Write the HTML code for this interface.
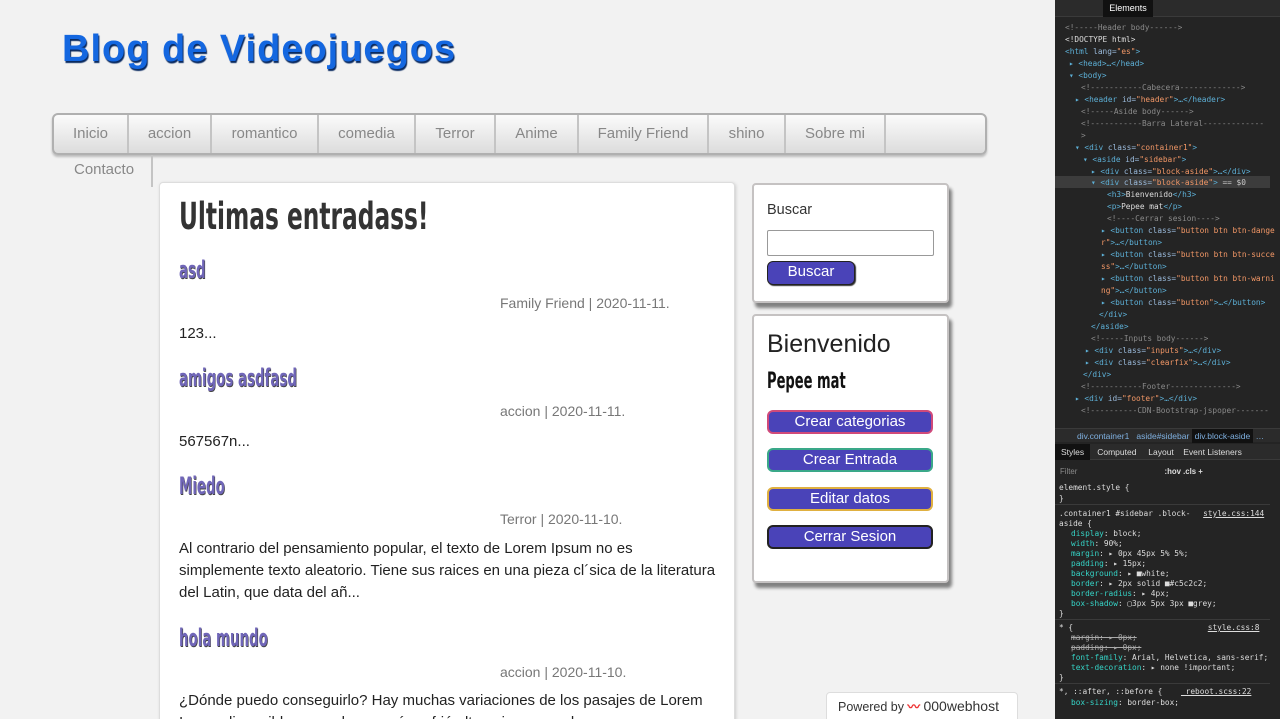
<!DOCTYPE html>
<html><head><meta charset="utf-8"><style>
*{margin:0;padding:0;box-sizing:border-box}
html,body{width:1280px;height:719px;overflow:hidden}
body{background:#f3f3f3;font-family:"Liberation Sans",Arial,sans-serif;position:relative}
.page{position:absolute;left:0;top:0;width:1055px;height:719px;background:#f2f2f2;overflow:hidden}
h1{position:absolute;left:62px;top:28px;font-size:38px;font-weight:bold;color:#1467e0;text-shadow:1px 2px 1px #0a2a60;letter-spacing:1px}
.nav{position:absolute;left:52px;top:113px;width:935px;height:42px;border:2px solid #b0b0b0;border-radius:6px;background:linear-gradient(#fbfbfb,#dcdcdc);box-shadow:0 2px 2px #bbb}
.nav span{position:absolute;top:0;height:38px;line-height:38px;text-align:center;color:#888;font-size:15px;border-right:2px solid #c4c4c4}
.cont{position:absolute;left:52px;top:155px;width:101px;height:32px;border-right:2px solid #c4c4c4;color:#888;font-size:15px;line-height:30px;padding-left:22px}
.main{position:absolute;left:159px;top:182px;width:576px;height:560px;background:#fff;border:1px solid #ddd;border-radius:4px;box-shadow:1px 1px 3px #ccc;padding:0 20px}
.main h2{position:absolute;left:19px;top:12px;font-size:37px;color:#333;font-weight:bold;font-family:"DejaVu Sans Condensed","Liberation Sans Narrow",sans-serif;transform:scaleX(.7);transform-origin:left;white-space:nowrap}
.t{position:absolute;left:19px;font-size:24px;color:#7066b8;font-weight:bold;font-family:"DejaVu Sans Condensed",sans-serif;transform:scaleX(.62);transform-origin:left;white-space:nowrap;text-shadow:1px 1px 0 #444}
.m{position:absolute;left:340px;font-size:14px;color:#777}
.p{position:absolute;left:19px;width:540px;font-size:15px;color:#222;line-height:22px}
.box{position:absolute;left:752px;width:197px;background:#fff;border:2px solid #c5c2c2;border-radius:4px;box-shadow:3px 5px 3px grey;padding:15px}
.btn{display:block;background:#4a43b8;color:#fff;font-size:15px;text-align:center;border-radius:6px;height:24px;line-height:20px;position:absolute;left:13px;width:166px}
.dev{position:absolute;left:1055px;top:0;width:225px;height:719px;background:#242424;font-family:"DejaVu Sans Mono",monospace;font-size:7.8px;color:#ddd;overflow:hidden}
.dev .l{position:absolute;white-space:nowrap}
.c{color:#8a8a8a}.tg{color:#5db0d7}.at{color:#9bbbdc}.v{color:#f29766}.pr{color:#35d4c7}
</style></head><body>
<div class="page">
<h1>Blog de Videojuegos</h1>
<div class="nav">
<span style="left:0;width:75px">Inicio</span><span style="left:75px;width:83px">accion</span><span style="left:158px;width:107px">romantico</span><span style="left:265px;width:97px">comedia</span><span style="left:362px;width:80px">Terror</span><span style="left:442px;width:83px">Anime</span><span style="left:525px;width:130px">Family Friend</span><span style="left:655px;width:77px">shino</span><span style="left:732px;width:100px">Sobre mi</span><span style="left:832px;width:100px;border:none"></span>
</div>
<div class="cont">Contacto</div>
<div class="main">
<h2>Ultimas entradass!</h2>
<div class="t" style="top:73px">asd</div>
<div class="m" style="top:112px">Family Friend | 2020-11-11.</div>
<div class="p" style="top:140px">123...</div>
<div class="t" style="top:181px">amigos asdfasd</div>
<div class="m" style="top:220px">accion | 2020-11-11.</div>
<div class="p" style="top:248px">567567n...</div>
<div class="t" style="top:289px">Miedo</div>
<div class="m" style="top:328px">Terror | 2020-11-10.</div>
<div class="p" style="top:355px">Al contrario del pensamiento popular, el texto de Lorem Ipsum no es simplemente texto aleatorio. Tiene sus raices en una pieza cl´sica de la literatura del Latin, que data del añ...</div>
<div class="t" style="top:441px">hola mundo</div>
<div class="m" style="top:481px">accion | 2020-11-10.</div>
<div class="p" style="top:507px">¿Dónde puedo conseguirlo? Hay muchas variaciones de los pasajes de Lorem Ipsum disponibles, pero la mayoría sufrió alteraciones en alguna...</div>
</div>
<div class="box" style="top:183px;height:120px">
<div style="font-size:14.5px;color:#333;position:absolute;left:13px;top:17px">Buscar</div>
<div style="position:absolute;left:13px;top:45px;width:167px;height:26px;border:1px solid #999;border-radius:2px"></div>
<div class="btn" style="top:76px;width:88px;border:1px solid #222;box-shadow:1px 1px 1px #333">Buscar</div>
</div>
<div class="box" style="top:314px;height:269px">
<div style="position:absolute;left:13px;top:14px;font-size:25px;color:#222">Bienvenido</div>
<div style="position:absolute;left:13px;top:53px;font-size:22px;color:#111;font-weight:bold;font-family:'DejaVu Sans Condensed',sans-serif;transform:scaleX(.66);transform-origin:left;white-space:nowrap">Pepee mat</div>
<div class="btn" style="top:94px;border:2px solid #d04a7a">Crear categorias</div>
<div class="btn" style="top:132px;border:2px solid #3aa889">Crear Entrada</div>
<div class="btn" style="top:171px;border:2px solid #e0b040">Editar datos</div>
<div class="btn" style="top:209px;border:2px solid #222">Cerrar Sesion</div>
</div>
<div style="position:absolute;left:826px;top:692px;width:192px;height:30px;background:#fff;border:1px solid #ddd;border-radius:4px 4px 0 0;font-size:12.5px;color:#333;line-height:26px;padding-left:11px">Powered by <span style="color:#e33;font-weight:bold">〰</span> <span style="font-size:14px">000webhost</span></div>
<div style="position:absolute;left:1040px;top:0;width:15px;height:719px;background:#f1f1f1"></div>
</div>
<div class="dev">
<div style="position:absolute;left:0;top:0;width:225px;height:17px;background:#2b2b2b;border-bottom:1px solid #3a3a3a"></div>
<div style="position:absolute;left:48px;top:0;width:50px;height:17px;background:#111;color:#fff;font-family:'Liberation Sans';font-size:9px;line-height:17px;text-align:center">Elements</div>
<div class="l c" style="left:10px;top:23px">&lt;!-----Header body------&gt;</div>
<div class="l" style="left:10px;top:35px">&lt;!DOCTYPE html&gt;</div>
<div class="l tg" style="left:10px;top:47px">&lt;html <span class="at">lang=</span><span class="v">"es"</span>&gt;</div>
<div class="l tg" style="left:14px;top:59px">▸ &lt;head&gt;…&lt;/head&gt;</div>
<div class="l tg" style="left:14px;top:71px">▾ &lt;body&gt;</div>
<div class="l c" style="left:26px;top:83px">&lt;!-----------Cabecera-------------&gt;</div>
<div class="l tg" style="left:20px;top:95px">▸ &lt;header <span class="at">id=</span><span class="v">"header"</span>&gt;…&lt;/header&gt;</div>
<div class="l c" style="left:26px;top:107px">&lt;!-----Aside body------&gt;</div>
<div class="l c" style="left:26px;top:119px">&lt;!-----------Barra Lateral-------------</div>
<div class="l c" style="left:26px;top:131px">&gt;</div>
<div class="l tg" style="left:20px;top:143px">▾ &lt;div <span class="at">class=</span><span class="v">"container1"</span>&gt;</div>
<div class="l tg" style="left:28px;top:155px">▾ &lt;aside <span class="at">id=</span><span class="v">"sidebar"</span>&gt;</div>
<div class="l tg" style="left:36px;top:167px">▸ &lt;div <span class="at">class=</span><span class="v">"block-aside"</span>&gt;…&lt;/div&gt;</div>
<div style="position:absolute;left:0;top:176px;width:215px;height:12px;background:#3c3c3c"></div>
<div class="l tg" style="left:36px;top:178px">▾ &lt;div <span class="at">class=</span><span class="v">"block-aside"</span>&gt; <span style="color:#ccc">== $0</span></div>
<div class="l tg" style="left:52px;top:190px">&lt;h3&gt;<span style="color:#ddd">Bienvenido</span>&lt;/h3&gt;</div>
<div class="l tg" style="left:52px;top:202px">&lt;p&gt;<span style="color:#ddd">Pepee mat</span>&lt;/p&gt;</div>
<div class="l c" style="left:52px;top:214px">&lt;!----Cerrar sesion----&gt;</div>
<div class="l tg" style="left:46px;top:226px">▸ &lt;button <span class="at">class=</span><span class="v">"button btn btn-dange</span></div>
<div class="l v" style="left:46px;top:238px">r"<span class="tg">&gt;…&lt;/button&gt;</span></div>
<div class="l tg" style="left:46px;top:250px">▸ &lt;button <span class="at">class=</span><span class="v">"button btn btn-succe</span></div>
<div class="l v" style="left:46px;top:262px">ss"<span class="tg">&gt;…&lt;/button&gt;</span></div>
<div class="l tg" style="left:46px;top:274px">▸ &lt;button <span class="at">class=</span><span class="v">"button btn btn-warni</span></div>
<div class="l v" style="left:46px;top:286px">ng"<span class="tg">&gt;…&lt;/button&gt;</span></div>
<div class="l tg" style="left:46px;top:298px">▸ &lt;button <span class="at">class=</span><span class="v">"button"</span>&gt;…&lt;/button&gt;</div>
<div class="l tg" style="left:44px;top:310px">&lt;/div&gt;</div>
<div class="l tg" style="left:36px;top:322px">&lt;/aside&gt;</div>
<div class="l c" style="left:36px;top:334px">&lt;!-----Inputs body------&gt;</div>
<div class="l tg" style="left:30px;top:346px">▸ &lt;div <span class="at">class=</span><span class="v">"inputs"</span>&gt;…&lt;/div&gt;</div>
<div class="l tg" style="left:30px;top:358px">▸ &lt;div <span class="at">class=</span><span class="v">"clearfix"</span>&gt;…&lt;/div&gt;</div>
<div class="l tg" style="left:28px;top:370px">&lt;/div&gt;</div>
<div class="l c" style="left:26px;top:382px">&lt;!-----------Footer--------------&gt;</div>
<div class="l tg" style="left:20px;top:394px">▸ &lt;div <span class="at">id=</span><span class="v">"footer"</span>&gt;…&lt;/div&gt;</div>
<div class="l c" style="left:26px;top:406px">&lt;!----------CDN-Bootstrap-jspoper-------</div>
<div style="position:absolute;left:0;top:428px;width:225px;height:14px;background:#2b2b2b;border-top:1px solid #3a3a3a;font-family:'Liberation Sans';font-size:8.5px;line-height:14px;color:#7fb0e0;padding-left:22px">div.container1 &nbsp; aside#sidebar <span style="background:#111;padding:2px 3px">div.block-aside</span> …</div>
<div style="position:absolute;left:0;top:444px;width:225px;height:16px;background:#2b2b2b;border-bottom:1px solid #3a3a3a;font-family:'Liberation Sans';font-size:8.5px;line-height:16px;color:#ddd"><span style="background:#111;padding:3px 6px">Styles</span> &nbsp; Computed &nbsp; &nbsp; Layout &nbsp; &nbsp;Event Listeners</div>
<div class="l c" style="left:5px;top:467px;font-family:'Liberation Sans'">Filter <span style="margin-left:85px;color:#ddd;font-weight:bold">:hov .cls +</span></div>
<div class="l" style="left:4px;top:483px">element.style {</div><div class="l" style="left:4px;top:494px">}</div>
<div style="position:absolute;left:0;top:504px;width:215px;height:1px;background:#3a3a3a"></div>
<div class="l" style="left:4px;top:509px">.container1 #sidebar .block- <span style="text-decoration:underline;margin-left:8px">style.css:144</span></div>
<div class="l" style="left:4px;top:519px">aside {</div>
<div class="l" style="left:16px;top:529px"><span class="pr">display</span>: block;</div>
<div class="l" style="left:16px;top:539px"><span class="pr">width</span>: 90%;</div>
<div class="l" style="left:16px;top:549px"><span class="pr">margin</span>: ▸ 0px 45px 5% 5%;</div>
<div class="l" style="left:16px;top:559px"><span class="pr">padding</span>: ▸ 15px;</div>
<div class="l" style="left:16px;top:569px"><span class="pr">background</span>: ▸ ■white;</div>
<div class="l" style="left:16px;top:579px"><span class="pr">border</span>: ▸ 2px solid ■#c5c2c2;</div>
<div class="l" style="left:16px;top:589px"><span class="pr">border-radius</span>: ▸ 4px;</div>
<div class="l" style="left:16px;top:599px"><span class="pr">box-shadow</span>: ▢3px 5px 3px ■grey;</div>
<div class="l" style="left:4px;top:609px">}</div>
<div style="position:absolute;left:0;top:619px;width:215px;height:1px;background:#3a3a3a"></div>
<div class="l" style="left:4px;top:623px">* {  <span style="text-decoration:underline;margin-left:130px">style.css:8</span></div>
<div class="l" style="left:16px;top:633px;text-decoration:line-through;color:#aaa">margin: ▸ 0px;</div>
<div class="l" style="left:16px;top:643px;text-decoration:line-through;color:#aaa">padding: ▸ 0px;</div>
<div class="l" style="left:16px;top:653px"><span class="pr">font-family</span>: Arial, Helvetica, sans-serif;</div>
<div class="l" style="left:16px;top:663px"><span class="pr">text-decoration</span>: ▸ none !important;</div>
<div class="l" style="left:4px;top:673px">}</div>
<div style="position:absolute;left:0;top:683px;width:215px;height:1px;background:#3a3a3a"></div>
<div class="l" style="left:4px;top:687px">*, ::after, ::before { <span style="text-decoration:underline;margin-left:14px">_reboot.scss:22</span></div>
<div class="l" style="left:16px;top:698px"><span class="pr">box-sizing</span>: border-box;</div>
</div>
</body></html>
